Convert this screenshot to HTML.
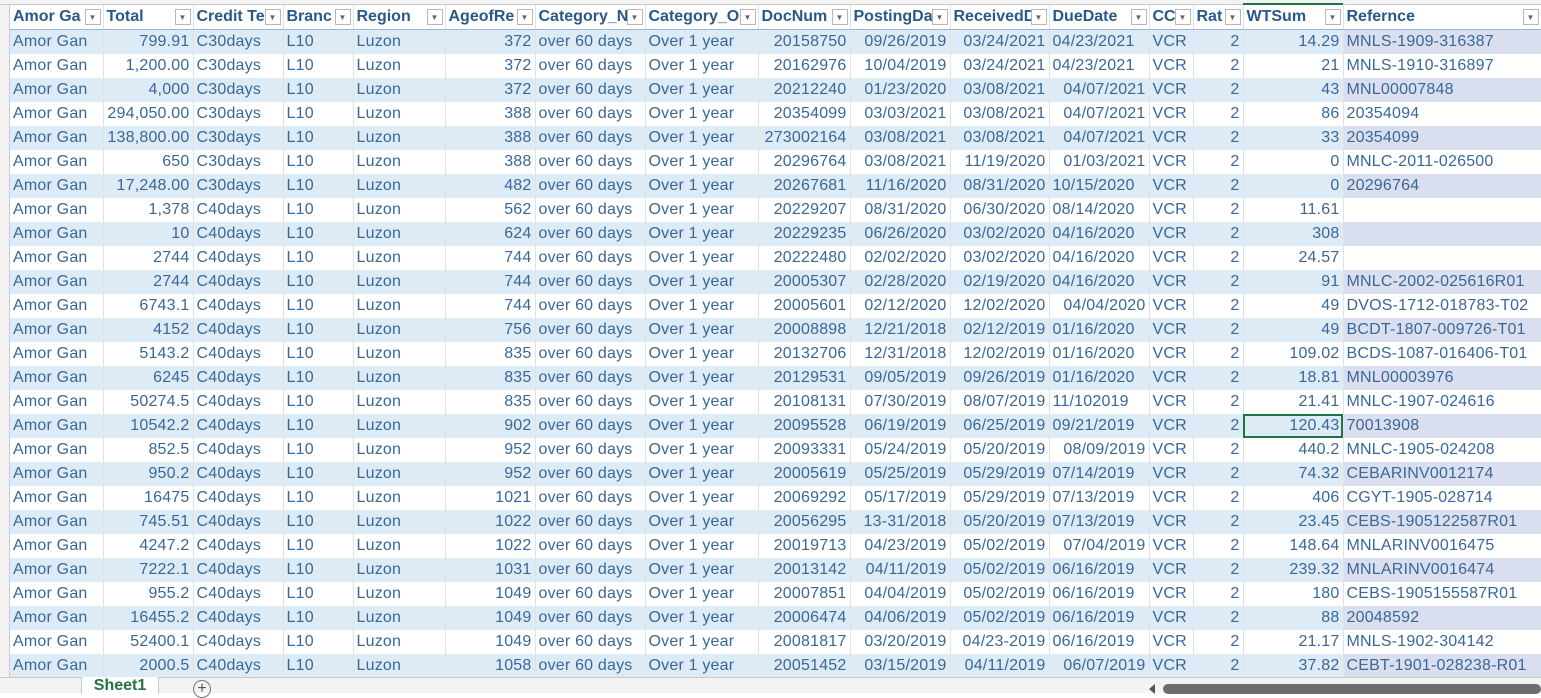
<!DOCTYPE html>
<html><head><meta charset="utf-8"><style>
*{margin:0;padding:0;box-sizing:border-box}
body{width:1541px;height:693px;overflow:hidden;background:#fff;font-family:"Liberation Sans",sans-serif;position:relative}
.top{position:absolute;left:0;top:0;width:1541px;height:5px;background:#f3f3f3;border-bottom:1px solid #c8c8c8}
.top .g{position:absolute;top:3px;height:2px;background:#217346;left:1243px;width:100px}
.rh{position:absolute;left:0;top:5px;width:10px;height:672px;background:#f3f3f3;border-right:1px solid #c8c8c8}
table{position:absolute;left:10px;top:5px;border-collapse:collapse;table-layout:fixed;width:1531px}
td{height:24px;font-size:16px;letter-spacing:0.2px;color:#3b6796;white-space:nowrap;overflow:hidden;padding:0 3px;border-right:1px solid #e2e2e2;line-height:24px}
tr.h td{font-weight:bold;color:#2a5887;border-bottom:1px solid #9bb7d8;position:relative;padding-right:20px;height:24px;letter-spacing:0}
tr.h td i{position:absolute;right:2px;top:4px;width:16px;height:16px;border:1px solid #b8b8b8;background:#fff;font-style:normal;font-size:8px;color:#666;text-align:center;line-height:15px;font-weight:normal}
tr:nth-child(even) td{background:#ddebf7}
tr:nth-child(even) td:last-child{background:#dadfef}
tr.h td{background:#fff!important}
.r{text-align:right}
td.sel{outline:2px solid #217346;outline-offset:-2px}
.bot{position:absolute;left:0;top:677px;width:1541px;height:16px;background:#f3f3f3;border-top:1px solid #c8c8c8}
.tab{position:absolute;left:81px;top:-1px;width:78px;height:17px;background:#fff;border-left:1px solid #c8c8c8;border-right:1px solid #c8c8c8;color:#217346;font-weight:bold;font-size:16px;text-align:center;line-height:17px}
.plus{position:absolute;left:193px;top:2px;width:18px;height:18px;border:1px solid #777;border-radius:50%;font-size:16px;line-height:15px;text-align:center;color:#555}
.sb{position:absolute;left:1163px;top:6px;width:378px;height:10px;background:#6d6d6d;border-radius:5px}
.arr{position:absolute;left:1149px;top:6px;width:0;height:0;border-top:5px solid transparent;border-bottom:5px solid transparent;border-right:6px solid #555}
</style></head><body>
<div class="top"><div class="g"></div></div>
<div class="rh"></div>
<table>
<colgroup><col style="width:93px"><col style="width:90px"><col style="width:90px"><col style="width:70px"><col style="width:92px"><col style="width:90px"><col style="width:110px"><col style="width:113px"><col style="width:92px"><col style="width:100px"><col style="width:99px"><col style="width:100px"><col style="width:44px"><col style="width:50px"><col style="width:100px"><col style="width:198px"></colgroup>
<tr class="h"><td>Amor Ga<i>▼</i></td><td>Total<i>▼</i></td><td>Credit Te<i>▼</i></td><td>Branc<i>▼</i></td><td>Region<i>▼</i></td><td>AgeofRe<i>▼</i></td><td>Category_N<i>▼</i></td><td>Category_O<i>▼</i></td><td>DocNum<i>▼</i></td><td>PostingDa<i>▼</i></td><td>ReceivedD<i>▼</i></td><td>DueDate<i>▼</i></td><td>CC<i>▼</i></td><td>Rat<i>▼</i></td><td>WTSum<i>▼</i></td><td>Refernce<i>▼</i></td></tr>
<tr><td>Amor Gan</td><td class="r">799.91</td><td>C30days</td><td>L10</td><td>Luzon</td><td class="r">372</td><td>over 60 days</td><td>Over 1 year</td><td class="r">20158750</td><td class="r">09/26/2019</td><td class="r">03/24/2021</td><td>04/23/2021</td><td>VCR</td><td class="r">2</td><td class="r">14.29</td><td>MNLS-1909-316387</td></tr>
<tr><td>Amor Gan</td><td class="r">1,200.00</td><td>C30days</td><td>L10</td><td>Luzon</td><td class="r">372</td><td>over 60 days</td><td>Over 1 year</td><td class="r">20162976</td><td class="r">10/04/2019</td><td class="r">03/24/2021</td><td>04/23/2021</td><td>VCR</td><td class="r">2</td><td class="r">21</td><td>MNLS-1910-316897</td></tr>
<tr><td>Amor Gan</td><td class="r">4,000</td><td>C30days</td><td>L10</td><td>Luzon</td><td class="r">372</td><td>over 60 days</td><td>Over 1 year</td><td class="r">20212240</td><td class="r">01/23/2020</td><td class="r">03/08/2021</td><td class="r">04/07/2021</td><td>VCR</td><td class="r">2</td><td class="r">43</td><td>MNL00007848</td></tr>
<tr><td>Amor Gan</td><td class="r">294,050.00</td><td>C30days</td><td>L10</td><td>Luzon</td><td class="r">388</td><td>over 60 days</td><td>Over 1 year</td><td class="r">20354099</td><td class="r">03/03/2021</td><td class="r">03/08/2021</td><td class="r">04/07/2021</td><td>VCR</td><td class="r">2</td><td class="r">86</td><td>20354094</td></tr>
<tr><td>Amor Gan</td><td class="r">138,800.00</td><td>C30days</td><td>L10</td><td>Luzon</td><td class="r">388</td><td>over 60 days</td><td>Over 1 year</td><td class="r">273002164</td><td class="r">03/08/2021</td><td class="r">03/08/2021</td><td class="r">04/07/2021</td><td>VCR</td><td class="r">2</td><td class="r">33</td><td>20354099</td></tr>
<tr><td>Amor Gan</td><td class="r">650</td><td>C30days</td><td>L10</td><td>Luzon</td><td class="r">388</td><td>over 60 days</td><td>Over 1 year</td><td class="r">20296764</td><td class="r">03/08/2021</td><td class="r">11/19/2020</td><td class="r">01/03/2021</td><td>VCR</td><td class="r">2</td><td class="r">0</td><td>MNLC-2011-026500</td></tr>
<tr><td>Amor Gan</td><td class="r">17,248.00</td><td>C30days</td><td>L10</td><td>Luzon</td><td class="r">482</td><td>over 60 days</td><td>Over 1 year</td><td class="r">20267681</td><td class="r">11/16/2020</td><td class="r">08/31/2020</td><td>10/15/2020</td><td>VCR</td><td class="r">2</td><td class="r">0</td><td>20296764</td></tr>
<tr><td>Amor Gan</td><td class="r">1,378</td><td>C40days</td><td>L10</td><td>Luzon</td><td class="r">562</td><td>over 60 days</td><td>Over 1 year</td><td class="r">20229207</td><td class="r">08/31/2020</td><td class="r">06/30/2020</td><td>08/14/2020</td><td>VCR</td><td class="r">2</td><td class="r">11.61</td><td></td></tr>
<tr><td>Amor Gan</td><td class="r">10</td><td>C40days</td><td>L10</td><td>Luzon</td><td class="r">624</td><td>over 60 days</td><td>Over 1 year</td><td class="r">20229235</td><td class="r">06/26/2020</td><td class="r">03/02/2020</td><td>04/16/2020</td><td>VCR</td><td class="r">2</td><td class="r">308</td><td></td></tr>
<tr><td>Amor Gan</td><td class="r">2744</td><td>C40days</td><td>L10</td><td>Luzon</td><td class="r">744</td><td>over 60 days</td><td>Over 1 year</td><td class="r">20222480</td><td class="r">02/02/2020</td><td class="r">03/02/2020</td><td>04/16/2020</td><td>VCR</td><td class="r">2</td><td class="r">24.57</td><td></td></tr>
<tr><td>Amor Gan</td><td class="r">2744</td><td>C40days</td><td>L10</td><td>Luzon</td><td class="r">744</td><td>over 60 days</td><td>Over 1 year</td><td class="r">20005307</td><td class="r">02/28/2020</td><td class="r">02/19/2020</td><td>04/16/2020</td><td>VCR</td><td class="r">2</td><td class="r">91</td><td>MNLC-2002-025616R01</td></tr>
<tr><td>Amor Gan</td><td class="r">6743.1</td><td>C40days</td><td>L10</td><td>Luzon</td><td class="r">744</td><td>over 60 days</td><td>Over 1 year</td><td class="r">20005601</td><td class="r">02/12/2020</td><td class="r">12/02/2020</td><td class="r">04/04/2020</td><td>VCR</td><td class="r">2</td><td class="r">49</td><td>DVOS-1712-018783-T02</td></tr>
<tr><td>Amor Gan</td><td class="r">4152</td><td>C40days</td><td>L10</td><td>Luzon</td><td class="r">756</td><td>over 60 days</td><td>Over 1 year</td><td class="r">20008898</td><td class="r">12/21/2018</td><td class="r">02/12/2019</td><td>01/16/2020</td><td>VCR</td><td class="r">2</td><td class="r">49</td><td>BCDT-1807-009726-T01</td></tr>
<tr><td>Amor Gan</td><td class="r">5143.2</td><td>C40days</td><td>L10</td><td>Luzon</td><td class="r">835</td><td>over 60 days</td><td>Over 1 year</td><td class="r">20132706</td><td class="r">12/31/2018</td><td class="r">12/02/2019</td><td>01/16/2020</td><td>VCR</td><td class="r">2</td><td class="r">109.02</td><td>BCDS-1087-016406-T01</td></tr>
<tr><td>Amor Gan</td><td class="r">6245</td><td>C40days</td><td>L10</td><td>Luzon</td><td class="r">835</td><td>over 60 days</td><td>Over 1 year</td><td class="r">20129531</td><td class="r">09/05/2019</td><td class="r">09/26/2019</td><td>01/16/2020</td><td>VCR</td><td class="r">2</td><td class="r">18.81</td><td>MNL00003976</td></tr>
<tr><td>Amor Gan</td><td class="r">50274.5</td><td>C40days</td><td>L10</td><td>Luzon</td><td class="r">835</td><td>over 60 days</td><td>Over 1 year</td><td class="r">20108131</td><td class="r">07/30/2019</td><td class="r">08/07/2019</td><td>11/102019</td><td>VCR</td><td class="r">2</td><td class="r">21.41</td><td>MNLC-1907-024616</td></tr>
<tr><td>Amor Gan</td><td class="r">10542.2</td><td>C40days</td><td>L10</td><td>Luzon</td><td class="r">902</td><td>over 60 days</td><td>Over 1 year</td><td class="r">20095528</td><td class="r">06/19/2019</td><td class="r">06/25/2019</td><td>09/21/2019</td><td>VCR</td><td class="r">2</td><td class="r sel">120.43</td><td>70013908</td></tr>
<tr><td>Amor Gan</td><td class="r">852.5</td><td>C40days</td><td>L10</td><td>Luzon</td><td class="r">952</td><td>over 60 days</td><td>Over 1 year</td><td class="r">20093331</td><td class="r">05/24/2019</td><td class="r">05/20/2019</td><td class="r">08/09/2019</td><td>VCR</td><td class="r">2</td><td class="r">440.2</td><td>MNLC-1905-024208</td></tr>
<tr><td>Amor Gan</td><td class="r">950.2</td><td>C40days</td><td>L10</td><td>Luzon</td><td class="r">952</td><td>over 60 days</td><td>Over 1 year</td><td class="r">20005619</td><td class="r">05/25/2019</td><td class="r">05/29/2019</td><td>07/14/2019</td><td>VCR</td><td class="r">2</td><td class="r">74.32</td><td>CEBARINV0012174</td></tr>
<tr><td>Amor Gan</td><td class="r">16475</td><td>C40days</td><td>L10</td><td>Luzon</td><td class="r">1021</td><td>over 60 days</td><td>Over 1 year</td><td class="r">20069292</td><td class="r">05/17/2019</td><td class="r">05/29/2019</td><td>07/13/2019</td><td>VCR</td><td class="r">2</td><td class="r">406</td><td>CGYT-1905-028714</td></tr>
<tr><td>Amor Gan</td><td class="r">745.51</td><td>C40days</td><td>L10</td><td>Luzon</td><td class="r">1022</td><td>over 60 days</td><td>Over 1 year</td><td class="r">20056295</td><td class="r">13-31/2018</td><td class="r">05/20/2019</td><td>07/13/2019</td><td>VCR</td><td class="r">2</td><td class="r">23.45</td><td>CEBS-1905122587R01</td></tr>
<tr><td>Amor Gan</td><td class="r">4247.2</td><td>C40days</td><td>L10</td><td>Luzon</td><td class="r">1022</td><td>over 60 days</td><td>Over 1 year</td><td class="r">20019713</td><td class="r">04/23/2019</td><td class="r">05/02/2019</td><td class="r">07/04/2019</td><td>VCR</td><td class="r">2</td><td class="r">148.64</td><td>MNLARINV0016475</td></tr>
<tr><td>Amor Gan</td><td class="r">7222.1</td><td>C40days</td><td>L10</td><td>Luzon</td><td class="r">1031</td><td>over 60 days</td><td>Over 1 year</td><td class="r">20013142</td><td class="r">04/11/2019</td><td class="r">05/02/2019</td><td>06/16/2019</td><td>VCR</td><td class="r">2</td><td class="r">239.32</td><td>MNLARINV0016474</td></tr>
<tr><td>Amor Gan</td><td class="r">955.2</td><td>C40days</td><td>L10</td><td>Luzon</td><td class="r">1049</td><td>over 60 days</td><td>Over 1 year</td><td class="r">20007851</td><td class="r">04/04/2019</td><td class="r">05/02/2019</td><td>06/16/2019</td><td>VCR</td><td class="r">2</td><td class="r">180</td><td>CEBS-1905155587R01</td></tr>
<tr><td>Amor Gan</td><td class="r">16455.2</td><td>C40days</td><td>L10</td><td>Luzon</td><td class="r">1049</td><td>over 60 days</td><td>Over 1 year</td><td class="r">20006474</td><td class="r">04/06/2019</td><td class="r">05/02/2019</td><td>06/16/2019</td><td>VCR</td><td class="r">2</td><td class="r">88</td><td>20048592</td></tr>
<tr><td>Amor Gan</td><td class="r">52400.1</td><td>C40days</td><td>L10</td><td>Luzon</td><td class="r">1049</td><td>over 60 days</td><td>Over 1 year</td><td class="r">20081817</td><td class="r">03/20/2019</td><td class="r">04/23-2019</td><td>06/16/2019</td><td>VCR</td><td class="r">2</td><td class="r">21.17</td><td>MNLS-1902-304142</td></tr>
<tr><td>Amor Gan</td><td class="r">2000.5</td><td>C40days</td><td>L10</td><td>Luzon</td><td class="r">1058</td><td>over 60 days</td><td>Over 1 year</td><td class="r">20051452</td><td class="r">03/15/2019</td><td class="r">04/11/2019</td><td class="r">06/07/2019</td><td>VCR</td><td class="r">2</td><td class="r">37.82</td><td>CEBT-1901-028238-R01</td></tr>
</table>
<div class="bot"><div class="tab">Sheet1</div><div class="plus">+</div><div class="arr"></div><div class="sb"></div></div>
</body></html>
